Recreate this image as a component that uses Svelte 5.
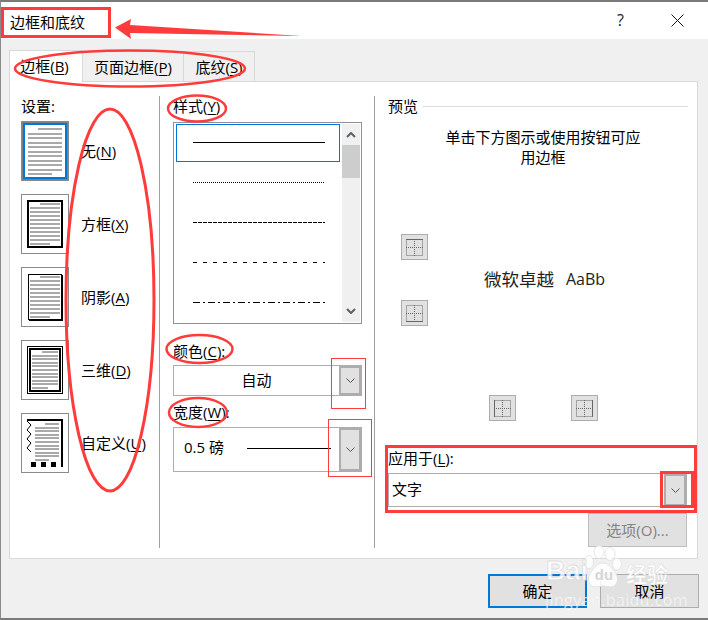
<script lang="ts">
  // Border page thumbnails
  const settings = [
    { id: 'none', label: '无', key: 'N' },
    { id: 'box', label: '方框', key: 'X' },
    { id: 'shadow', label: '阴影', key: 'A' },
    { id: '3d', label: '三维', key: 'D' },
    { id: 'custom', label: '自定义', key: 'U' }
  ];

  // Line styles in the list
  const lineStyles = ['', '1 1', '4 1', '4 6', '7 3 2 3'];

  // Grey "text" lines inside each thumbnail: x range, first y and step
  const lineBox: Record<string, { x1: number; x2: number; y: number; step: number }> = {
    none: { x1: 7, x2: 41, y: 7, step: 4.5 },
    box: { x1: 9, x2: 39, y: 9, step: 4 },
    shadow: { x1: 9, x2: 39, y: 9, step: 4 },
    '3d': { x1: 11, x2: 37, y: 11, step: 3.6 },
    custom: { x1: 14, x2: 38, y: 10, step: 3.6 }
  };
  const indexes = Array.from({ length: 11 }, (_, i) => i);
</script>

{#snippet thumb(id: string)}
  {@const b = lineBox[id]}
  <svg class="thumb" width="48" height="60" viewBox="0 0 48 60">
    {#if id === 'none'}
      <rect x="1.5" y="1.5" width="45" height="57" fill="none" stroke="#000" stroke-dasharray="1 1" />
      <rect x="3" y="3" width="42" height="54" fill="none" stroke="#0078d7" stroke-width="2" />
    {:else if id === 'box'}
      <rect x="7" y="7" width="34" height="46" fill="none" stroke="#000" stroke-width="2" />
    {:else if id === 'shadow'}
      <rect x="7.5" y="7.5" width="33" height="45" fill="none" stroke="#000" />
      <path d="M8 53h33V8" fill="none" stroke="#000" stroke-width="2" />
    {:else if id === '3d'}
      <rect x="6.5" y="6.5" width="35" height="47" fill="none" stroke="#000" />
      <rect x="9" y="9" width="30" height="42" fill="none" stroke="#000" stroke-width="2" />
    {:else}
      <path d="M6 7h35V52" fill="none" stroke="#000" stroke-width="2" />
      <path d="M6 8l4 4-4 5 4 4-4 5 4 4-4 5 4 4" fill="none" stroke="#000" />
      <path d="M10 49h5v5h-5zM20 49h5v5h-5zM30 49h5v5h-5zM40 49h2v5h-2z" fill="#000" />
    {/if}
    {#each indexes as i}
      {@const start = i === 0 ? b.x1 + 10 : b.x1}
      {@const end = i === 10 ? b.x2 - 10 : b.x2}
      <rect x={start} y={Math.round(b.y + i * b.step)} width={end - start} height="2" fill="#a9a9a9" />
    {/each}
  </svg>
{/snippet}

{#snippet chevron()}
  <svg width="9" height="5" viewBox="0 0 9 5"><path d="M.5.5l4 4 4-4" fill="none" stroke="#555" /></svg>
{/snippet}

{#snippet edgeIcon(side: string)}
  <svg class="edge-icon" width="17" height="17" viewBox="0 0 17 17">
    <path d="M.5.5h16v16h-16zM8.500 0v17M0 8.500h17" fill="none" stroke="#666" stroke-dasharray="1 1" />
    {#if side === 'top'}<path d="M0 .5h17" stroke="#666" />{/if}
    {#if side === 'bottom'}<path d="M0 16.500h17" stroke="#666" />{/if}
    {#if side === 'left'}<path d="M.5 0v17" stroke="#666" />{/if}
    {#if side === 'right'}<path d="M16.500 0v17" stroke="#666" />{/if}
  </svg>
{/snippet}

<div class="dialog">
  <header class="titlebar">
    <span class="title">边框和底纹</span>
    <span class="help">?</span>
    <svg class="close" width="13" height="13" viewBox="0 0 13 13"><path d="M.5.5l12 12M12.5.5l-12 12" stroke="#111" fill="none" /></svg>
  </header>

  <div class="content">
    <div class="tabs">
      <div class="tab active">边框(<u>B</u>)</div>
      <div class="tab pages">页面边框(<u>P</u>)</div>
      <div class="tab shading">底纹(<u>S</u>)</div>
    </div>

    <div class="panel">
      <section class="col settings">
        <div class="label">设置:</div>
        <div class="setting-list">
          {#each settings as s}
            <div class="setting">
              {@render thumb(s.id)}
              <span>{s.label}(<u>{s.key}</u>)</span>
            </div>
          {/each}
        </div>
      </section>

      <section class="col styles">
        <div class="label">样式(<u>Y</u>)</div>
        <div class="listbox">
          <div class="rows">
            {#each lineStyles as dash, i}
              <div class="row" class:selected={i === 0}>
                <svg width="132" height="1"><line x1="0" y1="0.5" x2="132" y2="0.5" stroke="#000" stroke-dasharray={dash} /></svg>
              </div>
            {/each}
          </div>
          <div class="scrollbar">
            <svg class="sb-arrow" width="10" height="6" viewBox="0 0 10 6"><path d="M1 5l4-4 4 4" fill="none" stroke="#606060" stroke-width="2" /></svg>
            <div class="sb-thumb"></div>
            <svg class="sb-arrow down" width="10" height="6" viewBox="0 0 10 6"><path d="M1 1l4 4 4-4" fill="none" stroke="#606060" stroke-width="2" /></svg>
          </div>
        </div>

        <div class="label color-label">颜色(<u>C</u>):</div>
        <div class="combo color-combo">
          <span class="combo-text center">自动</span>
          <span class="combo-btn">{@render chevron()}</span>
        </div>

        <div class="label width-label">宽度(<u>W</u>):</div>
        <div class="combo width-combo">
          <span class="combo-text raised">0.5 磅</span>
          <span class="width-line"></span>
          <span class="combo-btn">{@render chevron()}</span>
        </div>
      </section>

      <section class="col preview">
        <div class="preview-head"><span>预览</span><i></i></div>
        <p class="hint">单击下方图示或使用按钮可应<br />用边框</p>
        <div class="preview-grid">
          <span class="edge e1">{@render edgeIcon('top')}</span>
          <span class="sample"><span class="cn">微软卓越</span><span class="en">AaBb</span></span>
          <span class="edge e2">{@render edgeIcon('bottom')}</span>
          <span class="edge e3">{@render edgeIcon('left')}</span>
          <span class="edge e4">{@render edgeIcon('right')}</span>
        </div>
        <div class="label apply-label">应用于(<u>L</u>):</div>
        <div class="combo apply-combo">
          <span class="combo-text">文字</span>
          <span class="combo-btn">{@render chevron()}</span>
        </div>
        <div class="options-row"><button class="btn disabled">选项(O)...</button></div>
      </section>
    </div>

    <div class="actions">
      <button class="btn primary">确定</button>
      <button class="btn">取消</button>
    </div>
  </div>

  <!-- screenshot annotations -->
  <svg class="marks" width="708" height="620" viewBox="0 0 708 620">
    <g fill="none" stroke="#ff3b3b">
      <rect x="2.500" y="8.500" width="107" height="28" stroke-width="3" />
      <ellipse cx="130" cy="68.500" rx="115" ry="18" stroke-width="2.500" />
      <ellipse cx="197" cy="108.500" rx="29" ry="13" stroke-width="2.500" />
      <ellipse cx="110" cy="300" rx="44" ry="191" stroke-width="3" />
      <ellipse cx="199.500" cy="349" rx="33" ry="14" stroke-width="2.500" />
      <ellipse cx="198" cy="412.500" rx="29" ry="14.500" stroke-width="2.500" />
      <rect x="331.500" y="358.500" width="34" height="50" />
      <rect x="328.500" y="419.500" width="43" height="57" />
      <rect x="386.500" y="446.500" width="309" height="65" stroke-width="3" />
      <rect x="661.500" y="472.500" width="31" height="34" stroke-width="3" />
    </g>
    <path d="M115 27.500L131 19l-1 6 172 11-172-3 1 6z" fill="#ff3b3b" />
  </svg>

  <!-- watermark -->
  <div class="watermark">
    <div class="wm-top">
      <span class="wm-bai">Bai</span>
      <svg class="wm-paw" width="38" height="45" viewBox="0 0 38 45">
        <g fill="#fff" fill-opacity="0.85" stroke="#dcdcdc" stroke-opacity="0.7">
          <ellipse cx="5" cy="17" rx="4.500" ry="6.500" />
          <ellipse cx="15" cy="7" rx="5" ry="6.500" />
          <ellipse cx="26" cy="9" rx="5" ry="6.500" />
          <ellipse cx="33" cy="19" rx="4.500" ry="6" />
          <path d="M19 18c6 0 8 5 12 9 5 6 2 15-4 15-3 0-5-1-8-1s-5 1-8 1c-6 0-9-9-4-15 4-4 6-9 12-9z" />
        </g>
        <text x="20" y="35" text-anchor="middle" class="wm-du">du</text>
      </svg>
      <span class="wm-cn">经验</span>
    </div>
    <div class="wm-url">jingyan.baidu.com</div>
  </div>
</div>

<style>
  :global(body) { margin: 0; background: #f0f0f0; }
  .dialog {
    position: relative;
    width: 708px;
    height: 620px;
    box-sizing: border-box;
    overflow: hidden;
    border-top: 2px solid #7a7a7a;
    border-left: 1px solid #8a8a8a;
    border-bottom: 2px solid #7a7a7a;
    background: #f0f0f0;
    color: #000;
    font: 15px/20px "Open Sans", "Noto Sans CJK SC", sans-serif;
    display: flex;
    flex-direction: column;
  }
  u { text-underline-offset: 2px; }
  .titlebar {
    height: 37px;
    flex: none;
    background: #fff;
    display: flex;
    align-items: center;
    padding: 0 24px 0 9px;
  }
  .title { flex: 1; position: relative; top: 1px; }
  .help { margin-right: 47px; font-size: 16px; color: #222; position: relative; top: -1px; }
  .close { display: block; }

  .content { flex: 1; display: flex; flex-direction: column; padding: 11px 10px 0 8px; }
  .tabs { display: flex; height: 31px; flex: none; position: relative; }
  .tab {
    box-sizing: border-box;
    margin-top: 1px;
    border: 1px solid #d9d9d9;
    border-left: 0;
    border-bottom: 0;
    text-align: center;
    line-height: 30px;
    white-space: nowrap;
  }
  .tab.active {
    width: 74px;
    margin-top: 0;
    padding-right: 3px;
    background: #fff;
    border-left: 1px solid #d9d9d9;
    margin-bottom: -1px;
    position: relative;
  }
  .tab.pages { width: 101px; }
  .tab.shading { width: 71px; }
  .panel {
    height: 478px;
    flex: none;
    box-sizing: border-box;
    background: #fff;
    border: 1px solid #d9d9d9;
    padding: 14px 0 10px;
    display: flex;
  }
  .col { box-sizing: border-box; height: 100%; }
  .label { line-height: 20px; }

  .settings { width: 150px; border-right: 1px solid #a0a0a0; padding: 0 0 0 11px; flex: none; }
  .setting-list { display: flex; flex-direction: column; gap: 13px; margin-top: 5px; }
  .setting { display: flex; align-items: center; gap: 12px; height: 60px; }
  .thumb { display: block; outline: 1px solid #8a8a8a; outline-offset: -1px; flex: none; }

  .styles { width: 215px; border-right: 1px solid #a0a0a0; padding: 0 12px 0 13px; flex: none; }
  .listbox {
    box-sizing: border-box;
    height: 202px;
    margin-top: 6px;
    border: 1px solid #8f8f9d;
    display: flex;
    padding: 1px;
    overflow: hidden;
  }
  .rows { width: 164px; flex: none; padding: 0 1px; }
  .row {
    box-sizing: border-box;
    height: 40px;
    padding-left: 16px;
    display: flex;
    align-items: center;
    border: 1px solid transparent;
  }
  .row.selected { height: 38px; padding-bottom: 1px; border-color: #0078d7; }
  .row svg { display: block; }
  .scrollbar {
    flex: 1;
    margin-left: 1px;
    background: #f0f0f0;
    display: flex;
    flex-direction: column;
    align-items: center;
  }
  .sb-arrow { margin-top: 8px; flex: none; }
  .sb-arrow.down { margin-top: auto; margin-bottom: 8px; }
  .sb-thumb { width: 100%; height: 33px; background: #cdcdcd; margin-top: 7px; }

  .combo {
    box-sizing: border-box;
    display: flex;
    align-items: center;
    border: 1px solid #adadad;
    background: #fff;
  }
  .combo-text { padding: 0 0 2px 10px; white-space: nowrap; }
  .combo-text.center { flex: 1; text-align: center; padding-left: 0; }
  .combo-text.raised { padding-bottom: 5px; }
  .combo-btn {
    box-sizing: border-box;
    align-self: stretch;
    width: 22px;
    margin-left: auto;
    background: #e1e1e1;
    border: 2px solid #adadad;
    display: flex;
    align-items: center;
    justify-content: center;
    flex: none;
  }
  .color-label { margin-top: 17px; }
  .color-combo { height: 31px; margin-top: 4px; }
  .width-label { margin-top: 6px; }
  .width-combo { height: 45px; margin-top: 5px; }
  .width-line { width: 84px; height: 1px; background: #000; margin: 0 0 3px 23px; }

  .preview { flex: 1; padding: 0 9px 0 13px; }
  .preview-head { display: flex; align-items: center; gap: 5px; line-height: 20px; }
  .preview-head i { flex: 1; height: 1px; background: #dcdcdc; }
  .hint { margin: 11px 0 0; padding-left: 10px; text-align: center; }
  .preview-grid {
    display: grid;
    grid-template-columns: 13px 27px 61px 27px 55px 27px 1fr;
    grid-template-rows: 26px 40px 26px 69px 26px;
    margin-top: 67px;
  }
  .edge {
    box-sizing: border-box;
    background: #e1e1e1;
    border: 1px solid #adadad;
    display: flex;
    align-items: center;
    justify-content: center;
  }
  .edge-icon { display: block; }
  .e1 { grid-row: 1; grid-column: 2; }
  .e2 { grid-row: 3; grid-column: 2; }
  .e3 { grid-row: 5; grid-column: 4; }
  .e4 { grid-row: 5; grid-column: 6; }
  .sample {
    grid-row: 2;
    grid-column: 3 / -1;
    padding: 0 0 2px 56px;
    display: flex;
    align-items: center;
    gap: 12px;
    font-size: 17.5px;
    white-space: nowrap;
    color: #222;
  }
  .sample .en { font-size: 16px; }
  .apply-label { margin-top: 27px; }
  .apply-combo { height: 34px; margin-top: 5px; width: 299px; }
  .apply-combo .combo-text { padding-left: 3px; }
  .options-row { display: flex; justify-content: flex-end; margin: 6px 1px 0 0; }

  .btn {
    box-sizing: border-box;
    width: 99px;
    height: 34px;
    padding: 0;
    border: 1px solid #adadad;
    background: #e1e1e1;
    color: #000;
    font: inherit;
  }
  .btn.disabled { color: #838383; border-color: #bfbfbf; }
  .btn.primary { border: 2px solid #0078d7; }
  .actions { display: flex; justify-content: flex-end; gap: 13px; margin: 15px -1px 0 0; }

  .marks { position: absolute; left: -1px; top: -2px; pointer-events: none; }

  .watermark {
    position: absolute;
    left: 544px;
    top: 543px;
    width: 140px;
    pointer-events: none;
    color: #fff;
  }
  .wm-top { display: flex; align-items: flex-start; height: 47px; }
  .wm-bai {
    margin: 11px 0 0 1px;
    font: bold 27px/30px "Liberation Sans", sans-serif;
    color: #fff;
    opacity: 0.85;
    -webkit-text-stroke: 0.8px #dcdcdc;
  }
  .wm-paw { display: block; margin-left: -4px; flex: none; }
  .wm-du { font: bold 15px "Liberation Sans", sans-serif; fill: #d6d6d6; }
  .wm-cn {
    margin: 16px 0 0 4px;
    font: bold 21px/24px "Noto Sans CJK SC", sans-serif;
    color: #fff;
    white-space: nowrap;
    -webkit-text-stroke: 0.5px #dcdcdc;
  }
  .wm-url {
    font: 16px/16px "Open Sans", sans-serif;
    letter-spacing: 0.4px;
    color: #fff;
    opacity: 0.75;
    -webkit-text-stroke: 0.2px #d6d6d6;
    white-space: nowrap;
  }
</style>
